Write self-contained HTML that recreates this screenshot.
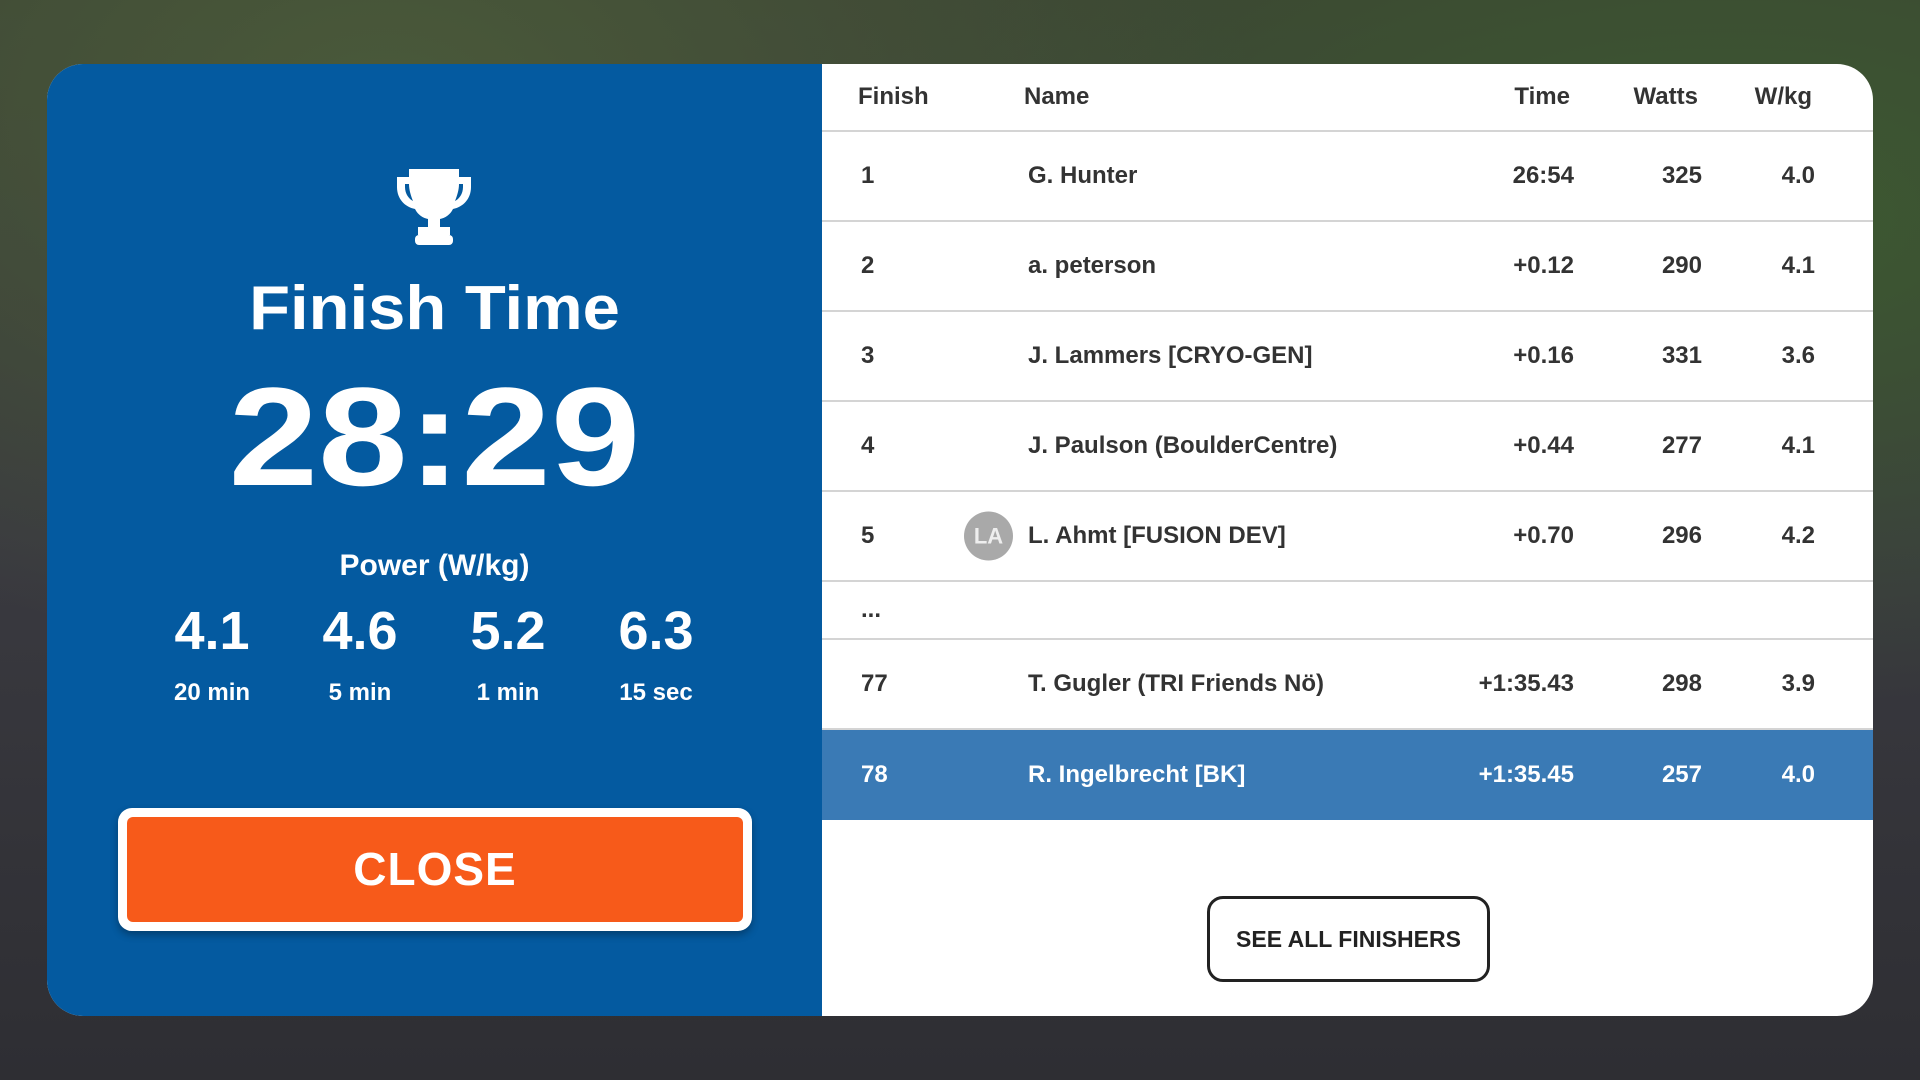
<!DOCTYPE html>
<html><head><meta charset="utf-8"><style>
*{margin:0;padding:0;box-sizing:border-box}
body{width:1920px;height:1080px;overflow:hidden;font-family:"Liberation Sans",sans-serif;
background:radial-gradient(ellipse at 20% 10%,#4a5a3a 0%,transparent 40%),radial-gradient(ellipse at 90% 20%,#3d5a30 0%,transparent 40%),linear-gradient(180deg,#3b4234 0%,#3a3a40 50%,#2e2e33 100%);position:relative}
.panel{position:absolute;left:47px;top:64px;width:1826px;height:952px;border-radius:36px;overflow:hidden;background:#fff}
.left{position:absolute;left:0;top:0;width:775px;height:952px;background:#045aa0;color:#fff;text-align:center}
.right{position:absolute;left:775px;top:0;right:0;height:952px;color:#222}
.row{position:absolute;left:0;right:0;height:90px;border-bottom:2px solid #d4d4d4;font-size:24px;font-weight:bold;color:#333}
.row span{position:absolute;top:50%;transform:translateY(-50%)}
.c1{left:39px}.c2{left:206px}.c3{right:299px}.c4{right:171px}.c5{right:58px}
.hl{background:#3a7ab5;color:#fff;border-bottom:none}
.hd{position:absolute;top:0;left:0;right:0;height:68px;border-bottom:2px solid #d4d4d4;font-size:24px;font-weight:bold;color:#333}
.hd span{position:absolute;top:50%;transform:translateY(-50%)}
.n span{position:absolute;width:120px}
</style></head><body>
<div class="panel">
<div class="left">
<svg style="position:absolute;left:348px;top:103px" width="78" height="78" viewBox="0 0 78 78"><path d="M14 2h50v8h12v10c0 12-8 20-18 22-3 6-8 9-13 10v8h10v8H23v-8h10v-8c-5-1-10-4-13-10C10 40 2 32 2 20V10h12zM10 17v3c0 7 4 12 8 14-2-5-4-11-4-17zM68 17h-4c0 6-2 12-4 17 4-2 8-7 8-14z" fill="#fff"/><rect x="20" y="68" width="38" height="10" rx="4" fill="#fff"/></svg>
<div style="position:absolute;left:0;right:0;top:209px;font-size:62px;font-weight:bold;transform:scaleX(1.08)">Finish Time</div>
<div style="position:absolute;left:0;right:0;top:303px;font-size:140px;font-weight:bold;line-height:1;transform:scaleX(1.15)">28:29</div>
<div style="position:absolute;left:0;right:0;top:485px;font-size:30px;font-weight:bold">Power (W/kg)</div>
<div class="n" style="position:absolute;left:0;top:536px;width:775px;font-size:54px;font-weight:bold">
<span style="left:105px">4.1</span><span style="left:253px">4.6</span><span style="left:401px">5.2</span><span style="left:549px">6.3</span></div>
<div class="n" style="position:absolute;left:0;top:615px;width:775px;font-size:24px;font-weight:bold">
<span style="left:105px">20 min</span><span style="left:253px">5 min</span><span style="left:401px">1 min</span><span style="left:549px">15 sec</span></div>
<div style="position:absolute;left:71px;top:744px;width:634px;height:123px;background:#fff;border-radius:14px;padding:9px;box-shadow:0 4px 8px rgba(0,0,0,.3)"><div style="width:100%;height:100%;background:#f75a1a;border-radius:6px;font-size:46px;font-weight:bold;line-height:105px;letter-spacing:1px">CLOSE</div></div>
</div>
<div class="right">
<div class="hd"><span style="left:36px">Finish</span><span style="left:202px">Name</span><span style="right:303px">Time</span><span style="right:175px">Watts</span><span style="right:61px">W/kg</span></div>
<div class="row" style="top:68px"><span class="c1">1</span><span class="c2">G. Hunter</span><span class="c3">26:54</span><span class="c4">325</span><span class="c5">4.0</span></div>
<div class="row" style="top:158px"><span class="c1">2</span><span class="c2">a. peterson</span><span class="c3">+0.12</span><span class="c4">290</span><span class="c5">4.1</span></div>
<div class="row" style="top:248px"><span class="c1">3</span><span class="c2">J. Lammers [CRYO-GEN]</span><span class="c3">+0.16</span><span class="c4">331</span><span class="c5">3.6</span></div>
<div class="row" style="top:338px"><span class="c1">4</span><span class="c2">J. Paulson (BoulderCentre)</span><span class="c3">+0.44</span><span class="c4">277</span><span class="c5">4.1</span></div>
<div class="row" style="top:428px"><span class="c1">5</span><span style="left:142px;width:49px;height:49px;border-radius:50%;background:#a9a9a9;color:#eee;font-size:22px;line-height:49px;text-align:center">LA</span><span class="c2">L. Ahmt [FUSION DEV]</span><span class="c3">+0.70</span><span class="c4">296</span><span class="c5">4.2</span></div>
<div class="row" style="top:518px;height:58px"><span class="c1">...</span></div>
<div class="row" style="top:576px"><span class="c1">77</span><span class="c2">T. Gugler (TRI Friends Nö)</span><span class="c3">+1:35.43</span><span class="c4">298</span><span class="c5">3.9</span></div>
<div class="row hl" style="top:666px"><span class="c1">78</span><span class="c2">R. Ingelbrecht [BK]</span><span class="c3">+1:35.45</span><span class="c4">257</span><span class="c5">4.0</span></div>
<div style="position:absolute;left:385px;top:832px;width:283px;height:86px;border:3px solid #222;border-radius:16px;font-size:23px;font-weight:bold;line-height:80px;text-align:center;color:#222">SEE ALL FINISHERS</div>
</div>
</div>
</body></html>
